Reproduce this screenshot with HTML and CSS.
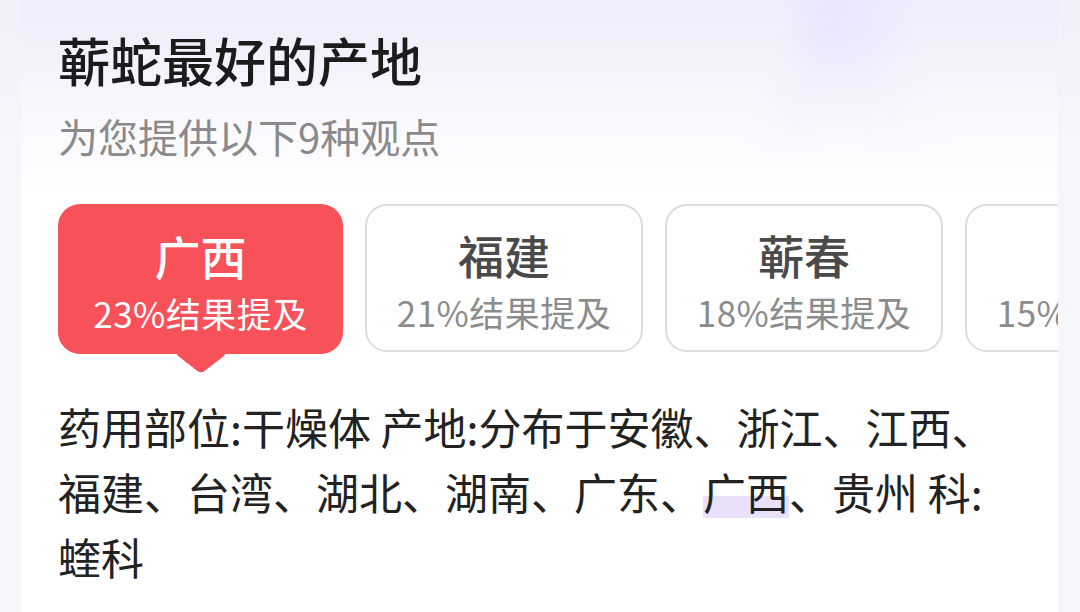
FILE: index.html
```html
<!DOCTYPE html>
<html lang="zh-CN">
<head>
<meta charset="utf-8">
<title>蕲蛇最好的产地</title>
<link rel="stylesheet" href="styles.css">
</head>
<body>
<main class="card">
  <h1 class="title">蕲蛇最好的产地</h1>
  <p class="subtitle">为您提供以下9种观点</p>
  <div class="tabs">
    <div class="tab active">
      <span class="tab-name">广西</span>
      <span class="tab-pct">23%结果提及</span>
    </div>
    <div class="tab">
      <span class="tab-name">福建</span>
      <span class="tab-pct">21%结果提及</span>
    </div>
    <div class="tab">
      <span class="tab-name">蕲春</span>
      <span class="tab-pct">18%结果提及</span>
    </div>
    <div class="tab">
      <span class="tab-name">浙江</span>
      <span class="tab-pct">15%结果提及</span>
    </div>
  </div>
  <p class="body">药用部位:干燥体 产地:分布于安徽、浙江、江西、福建、台湾、湖北、湖南、广东、<span class="mark">广西</span>、贵州 科:蝰科</p>
</main>
</body>
</html>
```

FILE: styles.css
```css
* { box-sizing: border-box; }

html, body {
  margin: 0;
  padding: 0;
  width: 1080px;
  height: 612px;
  overflow: hidden;
  background: linear-gradient(180deg, #f1f0fb 0px, #f6f6fb 160px, #f6f7fb 612px);
  font-family: "Noto Sans CJK SC", "Noto Sans", sans-serif;
}

.card {
  margin-left: 21px;
  width: 1037px;
  height: 612px;
  padding: 30px 48px 0 37px;
  overflow: hidden;
  background:
    linear-gradient(180deg, rgba(252, 252, 254, 0) 30px, rgba(252, 252, 254, 0.6) 120px, #fcfcfe 170px, #ffffff 200px),
    linear-gradient(112deg, transparent 60%, rgba(232, 228, 252, 0.6) 64%, transparent 70%),
    linear-gradient(68deg, transparent 78%, rgba(232, 228, 252, 0.5) 82%, transparent 88%),
    linear-gradient(180deg, #efedfb 0px, #f3f2fc 110px, #fcfcfe 170px, #ffffff 200px);
}

.title {
  margin: 0;
  font-size: 52px;
  line-height: 60px;
  font-weight: 500;
  color: #1c1c1c;
}

.subtitle {
  margin: 22px 0 0;
  font-size: 40px;
  line-height: 48px;
  color: #8a8a8c;
}

.tabs {
  display: flex;
  gap: 22px;
  margin: 44px -48px 0 0;
}

.tab {
  flex: 0 0 278px;
  height: 148px;
  border: 2px solid #dcdcdc;
  border-radius: 22px;
  background: #ffffff;
  display: flex;
  flex-direction: column;
  align-items: center;
  justify-content: center;
  gap: 12px;
  padding-top: 4px;
  position: relative;
}

.tab.active {
  flex-basis: 285px;
  height: 150px;
  border: none;
  background: #f7515a;
}

.tab.active::after {
  content: "";
  position: absolute;
  left: 50%;
  bottom: -18px;
  width: 37px;
  height: 37px;
  background: #f7515a;
  border-radius: 5px;
  transform: translateX(-50%) scaleY(0.77) rotate(45deg);
}

.tab-name {
  font-size: 46px;
  line-height: 52px;
  font-weight: 500;
  color: #4a4a4a;
}

.tab-pct {
  font-size: 35px;
  line-height: 40px;
  letter-spacing: 0.5px;
  color: #8c8c8c;
}

.tab.active .tab-name,
.tab.active .tab-pct {
  color: #ffffff;
  position: relative;
  z-index: 1;
}

.body {
  margin: 40px 0 0;
  font-size: 43px;
  line-height: 65px;
  color: #222222;
}

.mark {
  background: linear-gradient(#e9e0fa, #e9e0fa) no-repeat;
  background-size: 100% 22px;
  background-position: 0 36px;
}
```
